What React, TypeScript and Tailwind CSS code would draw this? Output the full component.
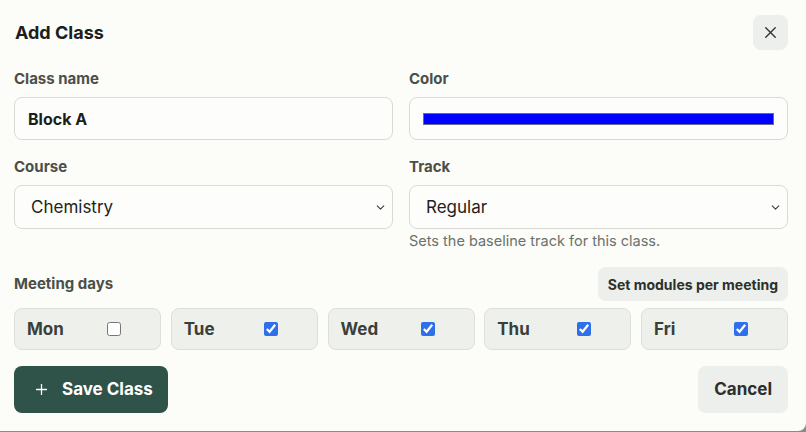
import { Plus, X, ChevronDown } from 'lucide-react';

const days = [
  { name: 'Mon', checked: false },
  { name: 'Tue', checked: true },
  { name: 'Wed', checked: true },
  { name: 'Thu', checked: true },
  { name: 'Fri', checked: true },
];

function SelectBox({ value }: { value: string }) {
  return (
    <div className="flex h-[44px] items-center justify-between rounded-lg border border-[#d9dad5] bg-[#fdfdfb] pl-[16px] pr-[5px]">
      <span className="pt-px text-[17px] text-[#1f2320]">{value}</span>
      <ChevronDown size={13} strokeWidth={2} className="text-[#3a3d3a]" />
    </div>
  );
}

export default function App() {
  return (
    <div className="h-[432px] w-[806px] bg-[#8a8a8a]" style={{ fontFamily: 'Inter, "Liberation Sans", sans-serif' }}>
      <div className="h-[431px] w-[806px] rounded-br-lg bg-[#fcfcf9] pl-[14px] pr-[18px] pt-[15px]">
        <div className="flex h-[35px] items-center justify-between">
          <h1 className="pl-px text-[18px] font-bold text-[#1c201d]">Add Class</h1>
          <button className="flex h-[35px] w-[35px] items-center justify-center rounded-lg bg-[#ecefeb] text-[#2d312e]">
            <X size={19} strokeWidth={1.7} />
          </button>
        </div>

        <div className="mt-[19px] grid grid-cols-2 gap-x-[16px]">
          <div>
            <label className="block text-[15px] font-bold leading-[20px] text-[#4a5049]">Class name</label>
            <div className="mt-[8px] flex h-[43px] items-center rounded-lg border border-[#d9dad5] bg-[#fdfdfb] px-[13px]">
              <span className="text-[16px] font-bold text-[#1c201d]">Block A</span>
            </div>
          </div>
          <div>
            <label className="block text-[15px] font-bold leading-[20px] text-[#4a5049]">Color</label>
            <div className="mt-[8px] flex h-[43px] items-center rounded-lg border border-[#d9dad5] bg-[#fdfdfb] px-[13px]">
              <div className="h-[12px] w-full border border-[#6b6b8a] bg-[#0000ff]" />
            </div>
          </div>

          <div className="mt-[17px]">
            <label className="block text-[15px] font-bold leading-[20px] text-[#4a5049]">Course</label>
            <div className="mt-[8px]">
              <SelectBox value="Chemistry" />
            </div>
          </div>
          <div className="mt-[17px]">
            <label className="block text-[15px] font-bold leading-[20px] text-[#4a5049]">Track</label>
            <div className="mt-[8px]">
              <SelectBox value="Regular" />
            </div>
            <p className="mt-[2px] text-[14.5px] leading-[20px] text-[#6b716b]">Sets the baseline track for this class.</p>
          </div>
        </div>

        <div className="mt-[16px] flex h-[34px] items-center justify-between">
          <span className="text-[15px] font-bold text-[#4a5049]">Meeting days</span>
          <button className="h-[34px] rounded-lg bg-[#ecefeb] px-[10px] text-[14px] font-bold text-[#2b302c]">
            Set modules per meeting
          </button>
        </div>

        <div className="mt-[7px] flex gap-[9.75px]">
          {days.map((d) => (
            <label
              key={d.name}
              className="flex h-[42px] flex-1 items-center rounded-lg border border-[#dcdfda] bg-[#eef0ec] pl-[12px]"
            >
              <span className="w-[80px] pt-px text-[17px] font-bold text-[#3a3f3b]">{d.name}</span>
              <input
                type="checkbox"
                defaultChecked={d.checked}
                className="m-0 h-[14px] w-[14px] accent-[#2f6fe9]"
              />
            </label>
          ))}
        </div>

        <div className="mt-[16px] flex items-center justify-between">
          <button className="flex h-[47px] items-center gap-[12px] rounded-lg bg-[#2f5249] pl-[19px] pr-[15px] text-[17px] font-bold text-white">
            <Plus size={17} strokeWidth={1.8} />
            Save Class
          </button>
          <button className="h-[47px] rounded-lg bg-[#ecefeb] px-[16px] text-[17px] font-bold text-[#2b302c]">
            Cancel
          </button>
        </div>
      </div>
    </div>
  );
}
